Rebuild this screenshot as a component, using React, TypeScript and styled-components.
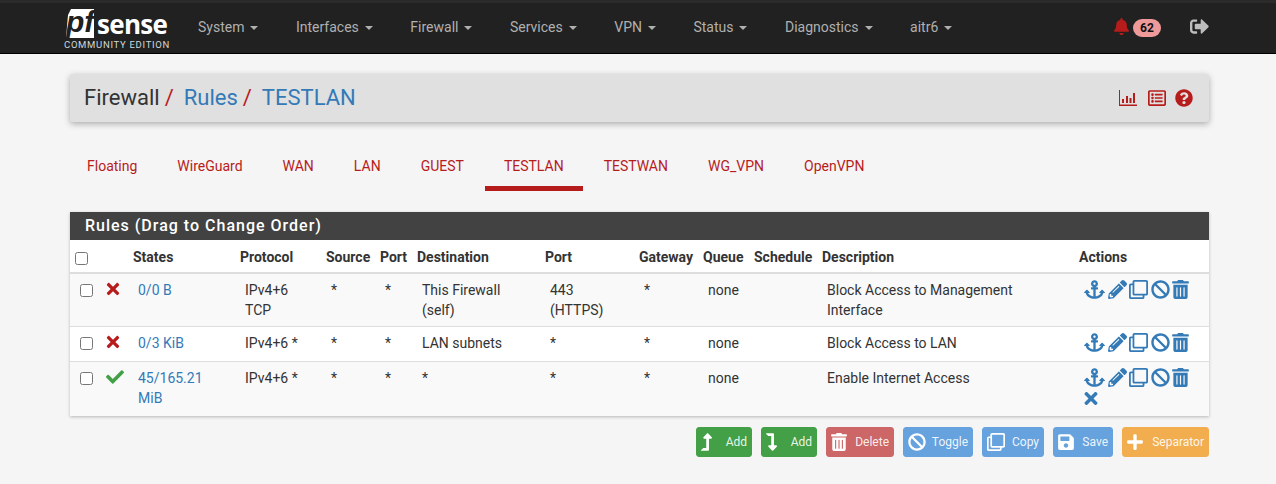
import React from "react";
import styled, { createGlobalStyle } from "styled-components";
import {
  FaAnchor,
  FaBan,
  FaBell,
  FaCheck,
  FaLevelDownAlt,
  FaLevelUpAlt,
  FaPencilAlt,
  FaPlus,
  FaQuestionCircle,
  FaRegClone,
  FaRegListAlt,
  FaSave,
  FaSignOutAlt,
  FaTimes,
  FaTrashAlt,
} from "react-icons/fa";

const GlobalStyle = createGlobalStyle`
  html, body {
    margin: 0;
    background: #f5f5f5;
    font-family: Roboto, "Liberation Sans", sans-serif;
    font-size: 14px;
    line-height: 20px;
    color: #333;
  }
`;

const Page = styled.div`
  width: 1276px;
  height: 484px;
  overflow: hidden;
`;

const Navbar = styled.nav`
  height: 47px;
  background: #212121;
  border-top: 3px solid #2b2b2b;
  border-bottom: 1px solid #000;
  display: flex;
  align-items: center;
  padding: 0 67px 3px 64px;
`;

const Logo = styled.div`
  width: 105px;
  display: flex;
  flex-direction: column;
  margin-top: 6px;
`;

const LogoTop = styled.div`
  display: flex;
  align-items: center;
  height: 29px;
  padding-left: 2px;
`;

const LogoBox = styled.span`
  width: 28px;
  height: 29px;
  background: #fff;
  clip-path: polygon(5px 0, 100% 0, 100% 100%, 0 100%, 2px 6px);
  color: #212121;
  font: italic 700 30px/26px "Liberation Sans", sans-serif;
  text-align: center;
  white-space: nowrap;
`;

const LogoWord = styled.span`
  color: #fff;
  font: 700 26px/24px "Open Sans", sans-serif;
  margin: 1px 0 0 3px;
  letter-spacing: -0.7px;
`;

const LogoEdition = styled.div`
  color: #cfd8dc;
  font-size: 9.5px;
  line-height: 11px;
  letter-spacing: 0.7px;
  white-space: nowrap;
  margin-top: 1px;
`;

const NavMenu = styled.div`
  display: flex;
  gap: 37.5px;
  margin-left: 29px;
`;

const NavItem = styled.span`
  color: #b0b0b0;
  font-size: 14px;
  display: inline-flex;
  align-items: center;
  gap: 6px;
`;

const Caret = styled.i`
  width: 0;
  height: 0;
  border-top: 4px solid #b0b0b0;
  border-left: 4px solid transparent;
  border-right: 4px solid transparent;
  margin-top: 2px;
`;

const NavRight = styled.div`
  margin-left: auto;
  display: flex;
  align-items: center;
`;

const BellIcon = styled(FaBell)`
  color: #b71c1c;
  font-size: 17px;
`;

const Badge = styled.span`
  background: #ef9a9a;
  color: #111;
  font-size: 12px;
  font-weight: 700;
  line-height: 18px;
  width: 28px;
  text-align: center;
  border-radius: 9px;
  margin: 3px 0 0 3px;
`;

const LogoutIcon = styled(FaSignOutAlt)`
  color: #bdbdbd;
  font-size: 19px;
  margin-left: 29px;
`;

const Content = styled.main`
  padding: 20px 67px 0 70px;
`;

const TitleBar = styled.header`
  height: 48px;
  background: #e0e0e0;
  border-radius: 3px;
  box-shadow: 0 2px 6px rgba(0, 0, 0, 0.3);
  display: flex;
  align-items: center;
  justify-content: space-between;
  padding: 0 16px 0 14px;
`;

const Crumbs = styled.h1`
  margin: 0;
  font-size: 22px;
  font-weight: 400;
  line-height: 26px;
  color: #333;
  display: flex;
`;

const CrumbLink = styled.span`
  color: #337ab7;
  margin-left: 10px;
`;

const Slash = styled.i`
  color: #b71c1c;
  font-style: normal;
  margin-left: 5px;
`;

const TitleIcons = styled.div`
  display: flex;
  align-items: center;
  gap: 9px;
  color: #b71c1c;
  font-size: 18px;
`;

const ChartIcon = styled.svg`
  width: 18px;
  height: 16px;
  margin-right: 2px;
`;

const Tabs = styled.ul`
  list-style: none;
  display: flex;
  margin: 21px 0 0 -3px;
  padding: 0;
`;

const Tab = styled.li<{ $active?: boolean }>`
  margin: 0 1px;
  padding: 13px 19px 0;
  height: 48px;
  box-sizing: border-box;
  color: #b71c1c;
  border-bottom: 5px solid ${(p) => (p.$active ? "#b71c1c" : "transparent")};
`;

const Panel = styled.section`
  margin-top: 21px;
  box-shadow: 0 1px 3px rgba(0, 0, 0, 0.25);
`;

const PanelHeading = styled.h2`
  margin: 0;
  height: 28px;
  background: #424242;
  color: #fff;
  font-size: 16px;
  font-weight: 500;
  line-height: 28px;
  letter-spacing: 1px;
  padding-left: 15px;
`;

const Table = styled.table`
  width: 1139px;
  table-layout: fixed;
  border-collapse: collapse;
  background: #fff;
`;

const Col = styled.col<{ $w: number }>`
  width: ${(p) => p.$w}px;
`;

const Th = styled.th`
  text-align: left;
  font-weight: 700;
  padding: 7px 0 5px 5px;
  white-space: nowrap;
  border-bottom: 2px solid #ddd;
  color: #333;
`;

const Row = styled.tr<{ $odd?: boolean }>`
  background: ${(p) => (p.$odd ? "#f9f9f9" : "#fff")};
  border-top: 1px solid #ddd;
`;

const Td = styled.td`
  vertical-align: top;
  padding: 6px 5px 6px 10px;
`;

const Check = styled.input.attrs({ type: "checkbox" })`
  display: block;
  width: 13px;
  height: 13px;
  margin: 4px 0 0;
`;

const HeadCheck = styled(Check)`
  margin: 2px 0 0;
`;

const StateLink = styled.span`
  color: #337ab7;
`;

const BlockIcon = styled(FaTimes)`
  color: #b71c1c;
  font-size: 18px;
  margin: 0 0 0 -2px;
  display: block;
`;

const PassIcon = styled(FaCheck)`
  color: #43a047;
  font-size: 18px;
  display: block;
`;

const ActionsWrap = styled.td`
  vertical-align: top;
  padding: 6px 0 6px 10px;
`;

const Actions = styled.div`
  width: 112px;
  display: flex;
  flex-wrap: wrap;
  align-items: flex-start;
  column-gap: 2.5px;
  color: #337ab7;
  font-size: 19px;
  svg {
    margin-bottom: 3px;
  }
`;

const AnchorIcon = styled(FaAnchor)`
  width: 21px;
`;

const TrashIcon = styled(FaTrashAlt)`
  width: 17px;
`;

const ClearIcon = styled(FaTimes)`
  width: 14px;
  && {
    margin: -1px 0 2px;
  }
`;

const ButtonBar = styled.div`
  display: flex;
  justify-content: flex-end;
  gap: 9px;
  margin-top: 11px;
`;

const Button = styled.button<{ $bg: string; $w: number }>`
  width: ${(p) => p.$w}px;
  height: 30px;
  border: 1px solid ${(p) => p.$bg};
  border-radius: 3px;
  background: ${(p) => p.$bg};
  color: rgba(255, 255, 255, 0.9);
  font-family: inherit;
  font-size: 12px;
  display: flex;
  align-items: center;
  justify-content: space-between;
  padding: 0 4px;
  svg {
    font-size: 18px;
    color: #fff;
  }
`;

const LevelUp = styled(FaLevelUpAlt)`
  width: 11px;
`;

const LevelDown = styled(FaLevelDownAlt)`
  width: 11px;
`;

const ButtonTrash = styled(FaTrashAlt)`
  width: 16px;
`;

const ButtonSave = styled(FaSave)`
  width: 16px;
`;

const ButtonPlus = styled(FaPlus)`
  width: 16px;
`;

const menu = ["System", "Interfaces", "Firewall", "Services", "VPN", "Status", "Diagnostics", "aitr6"];
const tabs = ["Floating", "WireGuard", "WAN", "LAN", "GUEST", "TESTLAN", "TESTWAN", "WG_VPN", "OpenVPN"];
const widths = [26, 32, 107, 86, 54, 37, 128, 94, 64, 51, 68, 257, 135];
const headers = ["", "States", "Protocol", "Source", "Port", "Destination", "Port", "Gateway", "Queue", "Schedule", "Description", "Actions"];

type Rule = {
  pass?: boolean;
  states: string;
  protocol: React.ReactNode;
  dest: React.ReactNode;
  port: React.ReactNode;
  desc: React.ReactNode;
  extra?: boolean;
};

const rules: Rule[] = [
  {
    states: "0/0 B",
    protocol: <>IPv4+6<br />TCP</>,
    dest: <>This Firewall<br />(self)</>,
    port: <>443<br />(HTTPS)</>,
    desc: <>Block Access to Management<br />Interface</>,
  },
  { states: "0/3 KiB", protocol: "IPv4+6 *", dest: "LAN subnets", port: "*", desc: "Block Access to LAN" },
  {
    pass: true,
    states: "45/165.21 MiB",
    protocol: "IPv4+6 *",
    dest: "*",
    port: "*",
    desc: "Enable Internet Access",
    extra: true,
  },
];

export default function App() {
  return (
    <Page>
      <GlobalStyle />
      <Navbar>
        <Logo>
          <LogoTop>
            <LogoBox>pf</LogoBox>
            <LogoWord>sense</LogoWord>
          </LogoTop>
          <LogoEdition>COMMUNITY EDITION</LogoEdition>
        </Logo>
        <NavMenu>
          {menu.map((m) => (
            <NavItem key={m}>
              {m}
              <Caret />
            </NavItem>
          ))}
        </NavMenu>
        <NavRight>
          <BellIcon />
          <Badge>62</Badge>
          <LogoutIcon />
        </NavRight>
      </Navbar>
      <Content>
        <TitleBar>
          <Crumbs>
            Firewall<Slash>/</Slash>
            <CrumbLink>Rules</CrumbLink>
            <Slash>/</Slash>
            <CrumbLink>TESTLAN</CrumbLink>
          </Crumbs>
          <TitleIcons>
            <ChartIcon viewBox="0 0 18 16" fill="currentColor">
              <path d="M0 0h1v14.5h17.5V16H0z" />
              <path d="M3 9h2v4H3zM7 6h2v7H7zM10.5 8h2v5h-2zM14 3h2v10h-2z" />
            </ChartIcon>
            <FaRegListAlt />
            <FaQuestionCircle />
          </TitleIcons>
        </TitleBar>
        <Tabs>
          {tabs.map((t) => (
            <Tab key={t} $active={t === "TESTLAN"}>
              {t}
            </Tab>
          ))}
        </Tabs>
        <Panel>
          <PanelHeading>Rules (Drag to Change Order)</PanelHeading>
          <Table>
            <colgroup>
              {widths.map((w, i) => (
                <Col key={i} $w={w} />
              ))}
            </colgroup>
            <thead>
              <tr>
                <Th>
                  <HeadCheck />
                </Th>
                {headers.map((h, i) => (
                  <Th key={i}>{h}</Th>
                ))}
              </tr>
            </thead>
            <tbody>
              {rules.map((r, i) => (
                <Row key={i} $odd={i % 2 === 0}>
                  <Td>
                    <Check />
                  </Td>
                  <Td>{r.pass ? <PassIcon /> : <BlockIcon />}</Td>
                  <Td>
                    <StateLink>{r.states}</StateLink>
                  </Td>
                  <Td>{r.protocol}</Td>
                  <Td>*</Td>
                  <Td>*</Td>
                  <Td>{r.dest}</Td>
                  <Td>{r.port}</Td>
                  <Td>*</Td>
                  <Td>none</Td>
                  <Td />
                  <Td>{r.desc}</Td>
                  <ActionsWrap>
                    <Actions>
                      <AnchorIcon />
                      <FaPencilAlt />
                      <FaRegClone />
                      <FaBan />
                      <TrashIcon />
                      {r.extra && <ClearIcon />}
                    </Actions>
                  </ActionsWrap>
                </Row>
              ))}
            </tbody>
          </Table>
        </Panel>
        <ButtonBar>
          <Button $bg="#43a047" $w={56}><LevelUp />Add</Button>
          <Button $bg="#43a047" $w={56}><LevelDown />Add</Button>
          <Button $bg="#cd6666" $w={68}><ButtonTrash />Delete</Button>
          <Button $bg="#66a3de" $w={70}><FaBan />Toggle</Button>
          <Button $bg="#66a3de" $w={62}><FaRegClone />Copy</Button>
          <Button $bg="#66a3de" $w={60}><ButtonSave />Save</Button>
          <Button $bg="#f2ad4e" $w={87}><ButtonPlus />Separator</Button>
        </ButtonBar>
      </Content>
    </Page>
  );
}
